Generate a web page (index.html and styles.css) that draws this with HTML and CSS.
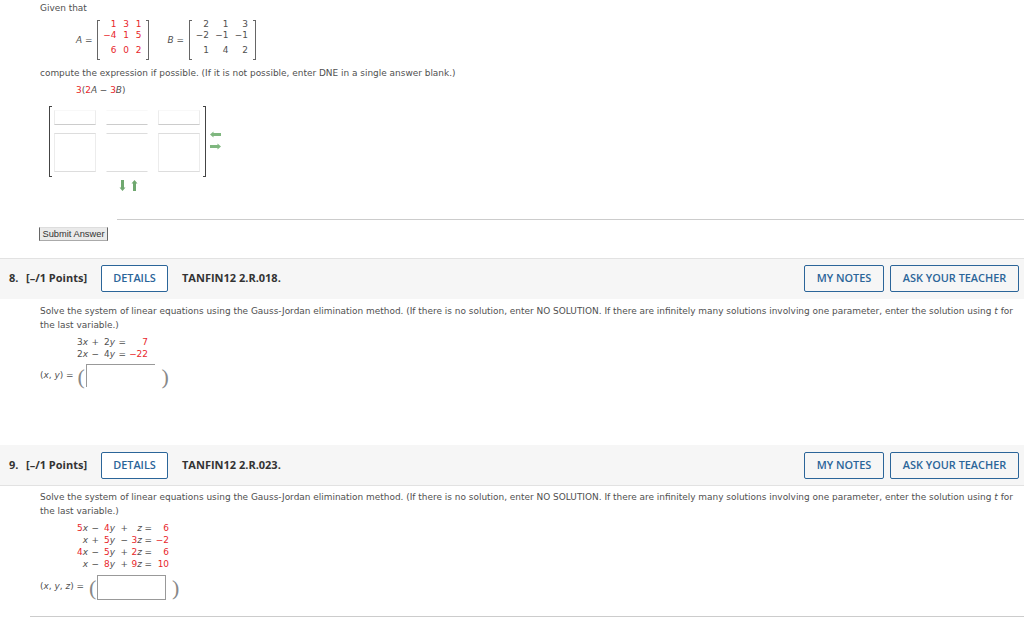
FILE: index.html
```html
<!DOCTYPE html>
<html lang="en">
<head>
    <meta charset="UTF-8">
    <title>Homework</title>
    <link rel="stylesheet" href="styles.css">
</head>
<body>
    <section class="question-body first">
        <p class="given">Given that</p>
        <div class="matrices">
            <span class="math-label"><i>A</i> =</span>
            <div class="matrix matrix-a red">
                <span>1</span><span>3</span><span>1</span>
                <span>&minus;4</span><span>1</span><span>5</span>
                <span>6</span><span>0</span><span>2</span>
            </div>
            <span class="math-label label-b"><i>B</i> =</span>
            <div class="matrix matrix-b">
                <span>2</span><span>1</span><span>3</span>
                <span>&minus;2</span><span>&minus;1</span><span>&minus;1</span>
                <span>1</span><span>4</span><span>2</span>
            </div>
        </div>
        <p class="prompt">compute the expression if possible. (If it is not possible, enter DNE in a single answer blank.)</p>
        <p class="expr"><span class="red">3</span>(<span class="red">2</span><i>A</i> &minus; <span class="red">3</span><i>B</i>)</p>
        <div class="answer-row">
            <div class="answer-matrix">
                <div class="cell short"></div>
                <div class="cell short open"></div>
                <div class="cell short"></div>
                <div class="cell tall"></div>
                <div class="cell tall open"></div>
                <div class="cell tall"></div>
            </div>
            <div class="col-arrows">
                <svg width="11" height="7" viewBox="0 0 11 7"><path d="M0 3.500 3.500 .5V2H11V5H3.500V6.500Z" fill="#7fb77f"/></svg>
                <svg width="11" height="7" viewBox="0 0 11 7"><path d="M11 3.500 7.500 .5V2H0V5H7.500V6.500Z" fill="#7fb77f"/></svg>
            </div>
        </div>
        <div class="row-arrows">
            <svg width="7" height="11" viewBox="0 0 7 11"><path d="M3.500 11 .5 7.500H2V0H5V7.500H6.500Z" fill="#6fa86f"/></svg>
            <svg width="7" height="11" viewBox="0 0 7 11"><path d="M3.500 0 .5 3.500H2V11H5V3.500H6.500Z" fill="#6fa86f"/></svg>
        </div>
        <hr class="rule-short">
        <button class="submit">Submit Answer</button>
    </section>

    <header class="question-bar">
        <span class="q-num">8.</span>
        <span class="q-points">[&ndash;/1 Points]</span>
        <a class="btn details">DETAILS</a>
        <span class="q-code">TANFIN12 2.R.018.</span>
        <a class="btn notes">MY NOTES</a>
        <a class="btn ask">ASK YOUR TEACHER</a>
    </header>
    <section class="question-body q8">
        <p class="prompt">Solve the system of linear equations using the Gauss-Jordan elimination method. (If there is no solution, enter NO SOLUTION. If there are infinitely many solutions involving one parameter, enter the solution using <i>t</i> for<br>the last variable.)</p>
        <div class="equations eq-two">
            <span>3<i>x</i></span><span>+</span><span>2<i>y</i></span><span>=</span><span class="red">7</span>
            <span>2<i>x</i></span><span>&minus;</span><span>4<i>y</i></span><span>=</span><span class="red">&minus;22</span>
        </div>
        <div class="answer-line">
            <span class="math-tuple">(<i>x</i>, <i>y</i>) =</span>
            <span class="paren">(</span>
            <div class="text-input"></div>
            <span class="paren">)</span>
        </div>
    </section>

    <header class="question-bar second">
        <span class="q-num">9.</span>
        <span class="q-points">[&ndash;/1 Points]</span>
        <a class="btn details">DETAILS</a>
        <span class="q-code">TANFIN12 2.R.023.</span>
        <a class="btn notes">MY NOTES</a>
        <a class="btn ask">ASK YOUR TEACHER</a>
    </header>
    <section class="question-body q9">
        <p class="prompt">Solve the system of linear equations using the Gauss-Jordan elimination method. (If there is no solution, enter NO SOLUTION. If there are infinitely many solutions involving one parameter, enter the solution using <i>t</i> for<br>the last variable.)</p>
        <div class="equations eq-four">
            <span><span class="red">5</span><i>x</i></span><span>&minus;</span><span><span class="red">4</span><i>y</i></span><span>+</span><span><i>z</i></span><span>=</span><span class="red">6</span>
            <span><i>x</i></span><span>+</span><span><span class="red">5</span><i>y</i></span><span>&minus;</span><span><span class="red">3</span><i>z</i></span><span>=</span><span class="red">&minus;2</span>
            <span><span class="red">4</span><i>x</i></span><span>&minus;</span><span><span class="red">5</span><i>y</i></span><span>+</span><span><span class="red">2</span><i>z</i></span><span>=</span><span class="red">6</span>
            <span><i>x</i></span><span>&minus;</span><span><span class="red">8</span><i>y</i></span><span>+</span><span><span class="red">9</span><i>z</i></span><span>=</span><span class="red">10</span>
        </div>
        <div class="answer-line">
            <span class="math-tuple">(<i>x</i>, <i>y</i>, <i>z</i>) =</span>
            <span class="paren">(</span>
            <div class="text-input wide"></div>
            <span class="paren">)</span>
        </div>
    </section>
    <hr class="rule-end">
</body>
</html>
```

FILE: styles.css
```css
* {
    box-sizing: border-box;
}

body {
    margin: 0;
    height: 626px;
    overflow: hidden;
    background: #fff;
    color: #505050;
    font-family: "DejaVu Sans", Verdana, sans-serif;
    font-size: 8.95px;
    line-height: 14px;
}

p {
    margin: 0;
}

.red {
    color: #e8262a;
}

.question-body {
    padding-left: 40px;
    padding-right: 10px;
}

.first {
    padding-top: 1px;
}

.given {
    height: 15px;
}

.matrices {
    display: flex;
    align-items: center;
    height: 40px;
    margin: 4px 0 0 36px;
}

.math-label {
    margin-right: 5px;
}

.label-b {
    margin-left: 18px;
}

/* matrix with brackets drawn as borders */
.matrix {
    display: grid;
    grid-template-rows: 9px 12px 19px;
    align-items: center;
    position: relative;
    height: 40px;
    padding: 0 4px;
    text-align: right;
    line-height: 9px;
    border-left: 1.5px solid #666;
    border-right: 1.5px solid #666;
}

.matrix::before,
.matrix::after {
    content: '';
    position: absolute;
    left: 0;
    right: 0;
    height: 1px;
    border-left: 2px solid #666;
    border-right: 2px solid #666;
}

.matrix::before {
    top: 0;
}

.matrix::after {
    bottom: 0;
}

.matrix-a {
    grid-template-columns: 14px 12.500px 12.500px;
    width: 52px;
}

.matrix-b {
    grid-template-columns: 15px 19.500px 19.500px;
    width: 67px;
}

.first .prompt {
    margin-top: 6px;
}

.expr {
    margin: 3px 0 0 36px;
}

.answer-row {
    display: flex;
    margin: 9px 0 0 9px;
}

.answer-matrix {
    display: grid;
    grid-template-columns: 42px 42px 42px;
    grid-template-rows: 15px 39px;
    column-gap: 10px;
    row-gap: 8px;
    width: 157px;
    height: 71px;
    padding: 4px 4px 0;
    border-left: 1.5px solid #444;
    border-right: 1.5px solid #444;
    position: relative;
}

.answer-matrix::before,
.answer-matrix::after {
    content: '';
    position: absolute;
    left: 0;
    right: 0;
    height: 1px;
    border-left: 2px solid #444;
    border-right: 2px solid #444;
}

.answer-matrix::before {
    top: 0;
}

.answer-matrix::after {
    bottom: 0;
}

.cell {
    border: 1px solid #ececec;
    border-bottom-color: #ccc;
}

.cell.short {
    border-top-color: #f8f8f8;
}

.cell.tall {
    border-top-color: #ddd;
    border-bottom-color: #ddd;
}

.cell.open {
    border-left-color: transparent;
    border-right-color: transparent;
}

.col-arrows {
    display: flex;
    flex-direction: column;
    gap: 5px;
    margin: 25px 0 0 4px;
}

.col-arrows svg,
.row-arrows svg {
    display: block;
}

.row-arrows {
    display: flex;
    gap: 5px;
    margin: 3px 0 0 79px;
}

.rule-short {
    height: 1px;
    margin: 28px -10px 0 77px;
    border: 0;
    background: #ccc;
}

.submit {
    display: block;
    width: 69px;
    height: 14px;
    margin: 7px 0 0 -1px;
    padding: 0;
    background: #eaeaea;
    border: 0;
    border-left: 1px solid #666;
    border-right: 1px solid #666;
    border-top: 1px solid #ddd;
    border-bottom: 1px solid #aaa;
    color: #333;
    font-family: "Liberation Sans", Arial, sans-serif;
    font-size: 9.300px;
    line-height: 12px;
}

/* question header */
.question-bar {
    display: flex;
    align-items: center;
    height: 41px;
    margin-top: 17px;
    padding: 0 5px 2px 9px;
    background: #f6f6f6;
    border-top: 1px solid #e2e2e2;
    color: #333;
    font-family: "Open Sans", "Noto Sans", sans-serif;
    font-size: 11px;
    font-weight: 700;
}

.question-bar.second {
    margin-top: 0;
    padding-bottom: 0;
    border-top: 0;
    border-bottom: 1px solid #e2e2e2;
}

.q-num {
    width: 17px;
}

.q-points {
    width: 75px;
}

.q-code {
    margin-left: 14px;
}

.btn {
    height: 27px;
    background: #fff;
    border: 1px solid #2b6599;
    border-radius: 2px;
    color: #2b6599;
    font-size: 10.900px;
    font-weight: 600;
    line-height: 23px;
    text-align: center;
}

.btn.details {
    width: 67px;
}

.btn.notes {
    width: 80px;
    margin-left: auto;
    background: transparent;
}

.btn.ask {
    width: 129px;
    margin-left: 6px;
    background: transparent;
}

.q8 {
    height: 146px;
    padding-top: 5px;
}

.q9 {
    padding-top: 4px;
}

.equations {
    display: grid;
    justify-content: start;
    margin: 4px 0 0 36px;
    line-height: 12px;
    text-align: right;
}

.eq-two {
    grid-template-columns: 12px 11px 16px 11px 22px;
}

.eq-four {
    grid-template-columns: 12px 11px 16px 13px 14px 10px 17px;
}

.answer-line {
    display: flex;
    align-items: center;
    margin-top: 4px;
}

.q9 .answer-line {
    margin-top: 5px;
}

.math-tuple {
    margin: 0 4px 3px 0;
}

.q9 .math-tuple {
    margin-right: 5px;
}

.paren {
    width: 8px;
    color: #888;
    font-family: "Liberation Serif", "Times New Roman", serif;
    font-size: 22px;
    line-height: 25px;
}

.text-input {
    width: 69px;
    height: 23px;
    margin: 0 7px 2px 0;
    border: 0;
    border-top: 1px solid #999;
    border-left: 1px solid #999;
}

.text-input.wide {
    height: 25px;
    margin-bottom: 0;
    border: 1px solid #999;
    margin-right: 6px;
}

.rule-end {
    position: absolute;
    top: 616px;
    left: 30px;
    right: 0;
    height: 1px;
    margin: 0;
    border: 0;
    background: #ccc;
}
```
